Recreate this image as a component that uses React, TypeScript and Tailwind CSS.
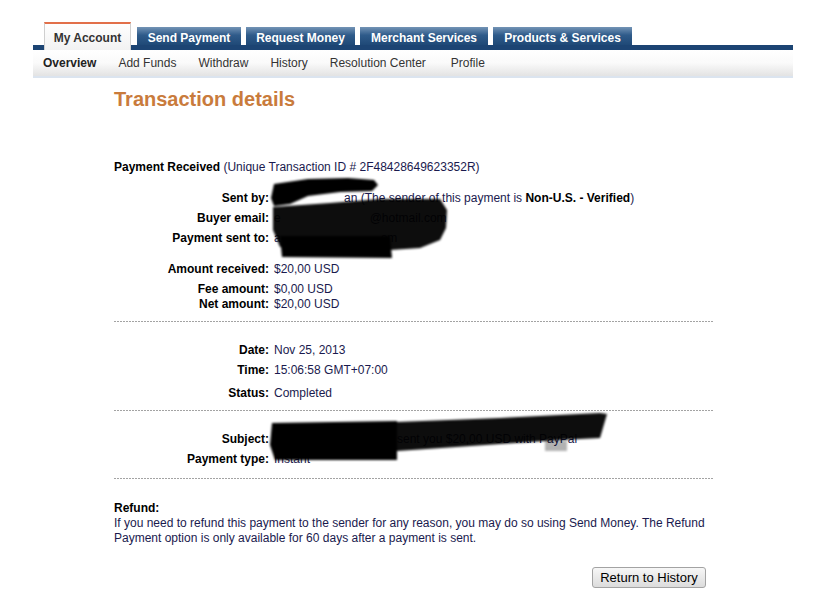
import React from "react";

const TABS = [
  { label: "Send Payment", w: "w-[104px]" },
  { label: "Request Money", w: "w-[109px]" },
  { label: "Merchant Services", w: "w-[128px]" },
  { label: "Products & Services", w: "w-[139px]" },
];

const SUBNAV = ["Add Funds", "Withdraw", "History", "Resolution Center", "Profile"];

const Field: React.FC<{ label: string; className?: string; children: React.ReactNode }> = ({
  label,
  className = "",
  children,
}) => (
  <div className={`flex leading-[15px] ${className}`}>
    <div className="w-[155px] shrink-0 text-right font-bold text-black">{label}</div>
    <div className="pl-[5px] whitespace-nowrap text-[#1a1a4e]">{children}</div>
  </div>
);

const Dotted: React.FC<{ className?: string }> = ({ className = "" }) => (
  <div
    className={`h-px w-[600px] bg-[repeating-linear-gradient(90deg,#a3a3a3_0_2px,transparent_2px_3px)] ${className}`}
  />
);

const App: React.FC = () => {
  return (
    <div className="relative w-[819px] h-[615px] bg-white font-['Liberation_Sans',Arial,sans-serif] text-[12px] text-black overflow-hidden">
      {/* Top navigation */}
      <div className="ml-[33px] w-[760px] pt-[22px]">
        <div className="flex items-end h-[23px] pl-[11px] gap-[5px]">
          <div className="relative z-10 -mb-[5px] mr-px flex h-[28px] w-[87px] items-center justify-center border-x border-[#cfcfcf] border-t-2 border-t-[#e2704a] bg-linear-to-b from-white to-[#f2f2f2] pt-[2px] font-bold text-[#333]">
            My Account
          </div>
          {TABS.map((t) => (
            <div
              key={t.label}
              className={`flex h-[18px] ${t.w} items-center justify-center bg-linear-to-b from-[#7394b6] via-[#2f5b8a] via-45% to-[#1f4977] pt-[4px] font-bold text-white`}
            >
              {t.label}
            </div>
          ))}
        </div>
        <div className="h-[5px] bg-[#1c4473]" />
        <div className="flex h-[26px] items-center gap-[22px] bg-linear-to-b from-white via-[#fafafa] to-[#e3e3e3] pl-[10px] text-[#333]">
          <span className="font-bold text-[#222]">Overview</span>
          {SUBNAV.map((s) => (
            <span key={s} className={s === "Profile" ? "ml-[3px]" : ""}>
              {s}
            </span>
          ))}
        </div>
        <div className="h-[2px] bg-[#dbe4ef]" />
      </div>

      {/* Content */}
      <div className="ml-[114px] w-[600px]">
        <h1 className="mt-[9px] text-[20px] leading-[24px] font-bold text-[#c97b3c]">Transaction details</h1>

        <p className="mt-[49px] leading-[15px] whitespace-nowrap text-[#1a1a4e]">
          <span className="font-bold text-black">Payment Received</span> (Unique Transaction ID # 2F48428649623352R)
        </p>

        <Field label="Sent by:" className="mt-[16px]">
          E<span className="inline-block w-[62px]" />an (The sender of this payment is{" "}
          <span className="font-bold text-black">Non-U.S. - Verified</span>)
        </Field>
        <Field label="Buyer email:" className="mt-[5px]">
          e<span className="inline-block w-[89px]" />@hotmail.com
        </Field>
        <Field label="Payment sent to:" className="mt-[5px]">
          a<span className="inline-block w-[100px]" />om
        </Field>

        <Field label="Amount received:" className="mt-[16px]">$20,00 USD</Field>
        <Field label="Fee amount:" className="mt-[5px]">$0,00 USD</Field>
        <Field label="Net amount:">$20,00 USD</Field>

        <Dotted className="mt-[9px]" />

        <Field label="Date:" className="mt-[21px]">Nov 25, 2013</Field>
        <Field label="Time:" className="mt-[5px]">15:06:58 GMT+07:00</Field>
        <Field label="Status:" className="mt-[8px]">Completed</Field>

        <Dotted className="mt-[9px]" />

        <Field label="Subject:" className="mt-[21px]">
          E<span className="inline-block w-[115px]" />sent you $20,00 USD with PayPal
        </Field>
        <Field label="Payment type:" className="mt-[5px]">Instant</Field>

        <Dotted className="mt-[11px]" />

        <div className="mt-[22px] leading-[15px] text-[#1a1a4e] whitespace-nowrap">
          <div className="font-bold text-black">Refund:</div>
          If you need to refund this payment to the sender for any reason, you may do so using Send Money. The Refund
          <br />
          Payment option is only available for 60 days after a payment is sent.
        </div>

        <div className="mt-[21px] flex justify-end pr-[8px]">
          <button className="h-[21px] w-[114px] rounded-[3px] border border-[#a3a3a3] bg-linear-to-b from-[#f7f7f7] to-[#dcdcdc] text-[13px] leading-none text-black">
            Return to History
          </button>
        </div>
      </div>

      {/* Redaction scribbles */}
      <svg className="absolute left-[268px] top-[176px]" width="185" height="86" viewBox="0 0 185 86">
        <defs>
          <filter id="soft1" x="-10%" y="-10%" width="120%" height="120%">
            <feGaussianBlur stdDeviation="1.2" />
          </filter>
        </defs>
        <g fill="#000" filter="url(#soft1)">
          <path d="M6 8 L40 3 L80 2 L106 4 L110 9 L104 15 L72 16 L40 20 L22 28 L6 30 L3 22 Z" />
          <path d="M5 31 L62 27 L112 23 L172 23 L179 34 L178 52 L172 64 L152 72 L122 74 L62 73 L12 71 L5 54 Z" fillOpacity="0.95" />
          <path d="M12 60 L122 60 L124 82 L14 81 Z" />
        </g>
      </svg>
      <svg className="absolute left-[266px] top-[408px]" width="346" height="56" viewBox="0 0 346 56">
        <defs>
          <filter id="soft2" x="-10%" y="-10%" width="120%" height="120%">
            <feGaussianBlur stdDeviation="1.2" />
          </filter>
        </defs>
        <g fill="#000" filter="url(#soft2)">
          <path d="M6 15 L131 13 L131 52 L9 52 L4 37 Z" />
          <path d="M131 14 L234 10 L334 5 L341 6 L334 30 L294 32 L234 36 L131 43 Z" fillOpacity="0.95" />
          <rect x="279" y="33" width="22" height="10" fillOpacity="0.3" />
        </g>
      </svg>
    </div>
  );
};

export default App;
